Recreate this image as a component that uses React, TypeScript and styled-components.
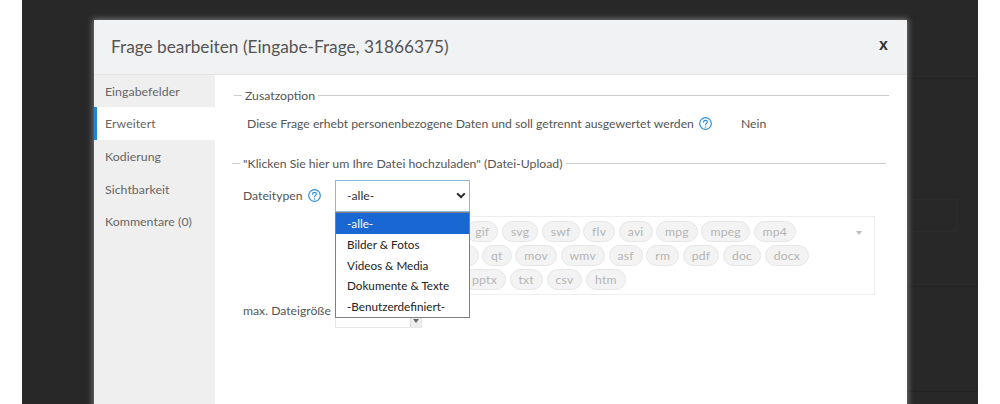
import React from "react";
import styled, { createGlobalStyle } from "styled-components";

const Global = createGlobalStyle`
  html, body { margin: 0; padding: 0; background: #fff; overflow: hidden; }
  body { font-family: Lato, "Open Sans", sans-serif; color: #555; }
  * { box-sizing: border-box; }
`;

const Stage = styled.div`
  width: 1000px;
  height: 404px;
  padding: 0 22px;
  background: #fff;
  overflow: hidden;
`;

const Backdrop = styled.div`
  width: 956px;
  height: 404px;
  padding: 20px 71px 0 72px;
  background: #282828;
  position: relative;
  overflow: hidden;
`;

const GhostLine = styled.div<{ $top: number }>`
  position: absolute;
  left: 885px;
  right: 0;
  top: ${(p) => p.$top}px;
  height: 1px;
  background: #222;
`;

const GhostBox = styled.div`
  position: absolute;
  left: 885px;
  width: 50px;
  top: 199px;
  height: 33px;
  border: 1px solid #2c2c2c;
  border-left: none;
`;

const Modal = styled.div`
  width: 813px;
  height: 400px;
  background: #fff;
  box-shadow: 0 0 6px 1px rgba(255, 255, 255, 0.38);
  position: relative;
  display: flex;
  flex-direction: column;
`;

const Header = styled.header`
  height: 54.7px;
  flex: none;
  background: #f1f2f4;
  border-bottom: 1px solid #e4e5e6;
  display: flex;
  align-items: center;
  justify-content: space-between;
  padding: 0 19px 0 17px;
`;

const Title = styled.h1`
  margin: 0;
  font-size: 17.25px;
  font-weight: 400;
  color: #555;
`;

const Close = styled.span`
  font-size: 16px;
  font-weight: 700;
  color: #333;
  font-family: "Liberation Sans", sans-serif;
  line-height: 1;
  margin-top: -4px;
`;

const Body = styled.div`
  flex: 1;
  display: flex;
  min-height: 0;
`;

const Sidebar = styled.nav`
  width: 121px;
  flex: none;
  background: #efefef;
`;

const NavItem = styled.div<{ $active?: boolean }>`
  height: 32.7px;
  display: flex;
  align-items: center;
  padding-left: ${(p) => (p.$active ? 8 : 11)}px;
  font-size: 12.3px;
  letter-spacing: 0.05px;
  color: #666;
  background: ${(p) => (p.$active ? "#fff" : "transparent")};
  border-left: ${(p) => (p.$active ? "3px solid #1f86d6" : "none")};
`;

const Content = styled.main`
  flex: 1;
  padding-left: 17px;
  position: relative;
`;

const Legend = styled.div<{ $top: number; $indent: number; $end: number }>`
  margin-top: ${(p) => p.$top}px;
  margin-left: ${(p) => p.$indent}px;
  width: ${(p) => p.$end}px;
  display: flex;
  align-items: center;
  font-size: 12.25px;
  color: #555;
  line-height: 16px;
  &::before {
    content: "";
    width: 8px;
    height: 1px;
    background: #ccc;
    margin-right: 3px;
  }
  &::after {
    content: "";
    flex: 1;
    height: 1px;
    background: #ccc;
    margin-left: 3px;
  }
`;

const InfoRow = styled.div`
  display: flex;
  align-items: center;
  margin: 10px 0 0 15px;
  height: 20px;
  font-size: 12.2px;
  color: #555;
`;

const Help = ({ className }: { className?: string }) => (
  <svg className={className} width="13" height="13" viewBox="0 0 13 13" fill="none">
    <circle cx="6.5" cy="6.5" r="5.8" stroke="#2f8fdc" strokeWidth="1.2" />
    <path
      d="M4.6 5.2c0-1.1.9-1.8 1.9-1.8s1.9.7 1.9 1.7c0 1.4-1.9 1.3-1.9 2.7"
      stroke="#2f8fdc"
      strokeWidth="1.2"
      strokeLinecap="round"
    />
    <circle cx="6.5" cy="9.9" r=".75" fill="#2f8fdc" />
  </svg>
);

const RowHelp = styled(Help)`
  margin-left: 5.5px;
  flex: none;
`;

const Value = styled.span`
  margin-left: 28.5px;
`;

const FieldRow = styled.div`
  display: flex;
  align-items: center;
  margin: 8px 0 0 11px;
  height: 32px;
`;

const FieldLabel = styled.label`
  width: 92px;
  flex: none;
  font-size: 12.2px;
  color: #555;
  display: flex;
  align-items: center;
  white-space: nowrap;
`;

const SelectBox = styled.div`
  width: 135px;
  height: 32px;
  border: 1px solid #8ab8dc;
  background: #fff;
  display: flex;
  align-items: center;
  justify-content: space-between;
  padding: 0 3px 0 11px;
  font-size: 12.2px;
  color: #333;
`;

const Dropdown = styled.ul`
  position: absolute;
  left: 120px;
  top: 137.3px;
  width: 135px;
  height: 106px;
  margin: 0;
  padding: 0;
  list-style: none;
  background: #fff;
  border: 1px solid #7f7f7f;
  font-size: 11.7px;
  color: #222;
  z-index: 3;
`;

const Option = styled.li<{ $selected?: boolean }>`
  height: 20.8px;
  line-height: 21px;
  padding-left: 11px;
  background: ${(p) => (p.$selected ? "#1967d2" : "transparent")};
  color: ${(p) => (p.$selected ? "#fff" : "#222")};
`;

const TagBox = styled.div`
  margin: 4px 0 0 103px;
  width: 540px;
  height: 79px;
  border: 1px solid #eee;
  padding: 4px 0 0 3px;
  display: flex;
  flex-direction: column;
  gap: 3px;
  position: relative;
`;

const TagRow = styled.div`
  display: flex;
  gap: 3.6px;
`;

const Tag = styled.span`
  height: 21px;
  padding: 0 8px;
  border: 1px solid #e6e6e6;
  border-radius: 11px;
  background: #f3f3f3;
  color: #b5b5b5;
  font-size: 12.2px;
  letter-spacing: 0.2px;
  line-height: 19px;
`;

const CoveredTags = styled.span<{ $w: number }>`
  width: ${(p) => p.$w}px;
  height: 21px;
  flex: none;
  border: 1px solid #e6e6e6;
  border-radius: 11px;
  background: #f3f3f3;
`;

const Caret = styled.span`
  position: absolute;
  right: 12px;
  top: 14px;
  width: 0;
  height: 0;
  border-left: 3.5px solid transparent;
  border-right: 3.5px solid transparent;
  border-top: 4px solid #bbb;
`;

const SizeRow = styled.div`
  display: flex;
  align-items: center;
  margin: 0 0 0 11px;
  height: 32px;
`;

const SizeInput = styled.div`
  width: 87px;
  height: 18px;
  margin-top: 16px;
  border: 1px solid #e6e6e6;
  position: relative;
`;

const Spinner = styled.span`
  position: absolute;
  right: 0;
  top: 0;
  bottom: 0;
  width: 11px;
  background: #eee;
  border-left: 1px solid #ddd;
  &::after {
    content: "";
    position: absolute;
    left: 2px;
    top: 8px;
    border-left: 3px solid transparent;
    border-right: 3px solid transparent;
    border-top: 4px solid #666;
  }
`;

const tagRows = [
  { covered: 123.6, tags: ["gif", "svg", "swf", "flv", "avi", "mpg", "mpeg", "mp4"] },
  { covered: 139.5, tags: ["qt", "mov", "wmv", "asf", "rm", "pdf", "doc", "docx"] },
  { covered: 120.5, tags: ["pptx", "txt", "csv", "htm"] },
];

const nav = ["Eingabefelder", "Erweitert", "Kodierung", "Sichtbarkeit", "Kommentare (0)"];
const options = ["-alle-", "Bilder & Fotos", "Videos & Media", "Dokumente & Texte", "-Benutzerdefiniert-"];

export default function App() {
  return (
    <Stage>
      <Global />
      <Backdrop>
        <GhostLine $top={78} />
        <GhostBox />
        <GhostLine $top={286} />
        <GhostLine $top={391} />
        <Modal>
          <Header>
            <Title>Frage bearbeiten (Eingabe-Frage, 31866375)</Title>
            <Close>x</Close>
          </Header>
          <Body>
            <Sidebar>
              {nav.map((n, i) => (
                <NavItem key={n} $active={i === 1}>{n}</NavItem>
              ))}
            </Sidebar>
            <Content>
              <Legend $top={13} $indent={2} $end={655}>Zusatzoption</Legend>
              <InfoRow>
                Diese Frage erhebt personenbezogene Daten und soll getrennt ausgewertet werden
                <RowHelp />
                <Value>Nein</Value>
              </InfoRow>
              <Legend $top={22} $indent={0} $end={654}>"Klicken Sie hier um Ihre Datei hochzuladen" (Datei-Upload)</Legend>
              <FieldRow>
                <FieldLabel>Dateitypen<RowHelp /></FieldLabel>
                <SelectBox>
                  -alle-
                  <svg width="10" height="7" viewBox="0 0 10 7" fill="none">
                    <path d="M1.2 1.4 5 5.2l3.8-3.8" stroke="#222" strokeWidth="2" />
                  </svg>
                </SelectBox>
              </FieldRow>
              <Dropdown>
                {options.map((o, i) => (
                  <Option key={o} $selected={i === 0}>{o}</Option>
                ))}
              </Dropdown>
              <TagBox>
                {tagRows.map((r) => (
                  <TagRow key={r.tags[0]}>
                    <CoveredTags $w={r.covered} />
                    {r.tags.map((t) => (
                      <Tag key={t}>{t}</Tag>
                    ))}
                  </TagRow>
                ))}
                <Caret />
              </TagBox>
              <SizeRow>
                <FieldLabel>max. Dateigröße</FieldLabel>
                <SizeInput><Spinner /></SizeInput>
              </SizeRow>
            </Content>
          </Body>
        </Modal>
      </Backdrop>
    </Stage>
  );
}
